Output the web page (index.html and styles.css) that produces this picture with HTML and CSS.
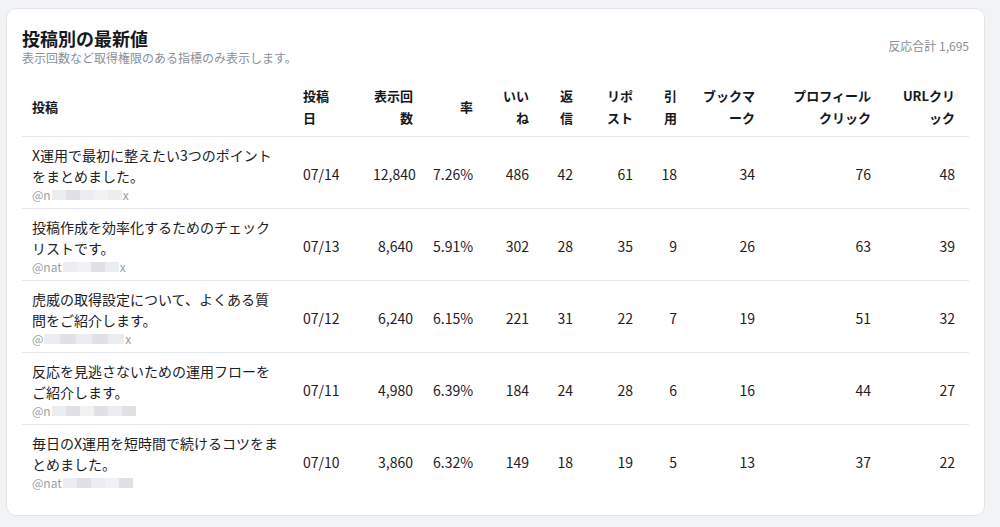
FILE: index.html
```html
<!DOCTYPE html>
<html lang="ja">
<head>
<meta charset="utf-8">
<title>投稿別の最新値</title>
<link rel="stylesheet" href="styles.css">
</head>
<body>
<div class="page">
  <section class="card">
    <header class="card-head">
      <div class="head-text">
        <h2 class="title">投稿別の最新値</h2>
        <p class="subtitle">表示回数など取得権限のある指標のみ表示します。</p>
      </div>
      <div class="total">反応合計 1,695</div>
    </header>
    <table class="posts">
      <colgroup>
        <col class="c-post"><col class="c-date"><col class="c-imp"><col class="c-rate"><col class="c-like"><col class="c-reply"><col class="c-rt"><col class="c-quote"><col class="c-bm"><col class="c-prof"><col class="c-url">
      </colgroup>
      <thead>
        <tr>
          <th class="left">投稿</th>
          <th class="left">投稿<br>日</th>
          <th>表示回<br>数</th>
          <th>率</th>
          <th>いい<br>ね</th>
          <th>返<br>信</th>
          <th>リポ<br>スト</th>
          <th>引<br>用</th>
          <th>ブックマ<br>ーク</th>
          <th>プロフィール<br>クリック</th>
          <th class="last">URLクリ<br>ック</th>
        </tr>
      </thead>
      <tbody>
        <tr>
          <td class="post"><div class="ptext">X運用で最初に整えたい3つのポイントをまとめました。</div><div class="handle">@n<span class="mz"><i class="m1"></i><i class="m2"></i><i class="m1"></i><i class="m3"></i><i class="m1"></i></span>x</div></td>
          <td class="left">07/14</td><td>12,840</td><td>7.26%</td><td>486</td><td>42</td><td>61</td><td>18</td><td>34</td><td>76</td><td class="last">48</td>
        </tr>
        <tr>
          <td class="post"><div class="ptext">投稿作成を効率化するためのチェックリストです。</div><div class="handle">@nat<span class="mz"><i class="m1"></i><i class="m3"></i><i class="m2"></i><i class="m1"></i></span>x</div></td>
          <td class="left">07/13</td><td>8,640</td><td>5.91%</td><td>302</td><td>28</td><td>35</td><td>9</td><td>26</td><td>63</td><td class="last">39</td>
        </tr>
        <tr>
          <td class="post"><div class="ptext">虎威の取得設定について、よくある質問をご紹介します。</div><div class="handle">@<span class="mz wide"><i class="m1"></i><i class="m2"></i><i class="m1"></i><i class="m2"></i><i class="m1"></i></span>x</div></td>
          <td class="left">07/12</td><td>6,240</td><td>6.15%</td><td>221</td><td>31</td><td>22</td><td>7</td><td>19</td><td>51</td><td class="last">32</td>
        </tr>
        <tr>
          <td class="post"><div class="ptext">反応を見逃さないための運用フローをご紹介します。</div><div class="handle">@n<span class="mz"><i class="m1"></i><i class="m2"></i><i class="m3"></i><i class="m2"></i><i class="m1"></i><i class="m2"></i></span></div></td>
          <td class="left">07/11</td><td>4,980</td><td>6.39%</td><td>184</td><td>24</td><td>28</td><td>6</td><td>16</td><td>44</td><td class="last">27</td>
        </tr>
        <tr>
          <td class="post"><div class="ptext">毎日のX運用を短時間で続けるコツをまとめました。</div><div class="handle">@nat<span class="mz"><i class="m1"></i><i class="m2"></i><i class="m1"></i><i class="m3"></i><i class="m2"></i></span></div></td>
          <td class="left">07/10</td><td>3,860</td><td>6.32%</td><td>149</td><td>18</td><td>19</td><td>5</td><td>13</td><td>37</td><td class="last">22</td>
        </tr>
      </tbody>
    </table>
  </section>
</div>
</body>
</html>
```
FILE: styles.css
```css
* { box-sizing: border-box; }
html, body { margin: 0; padding: 0; }
body {
  background: #f2f3f5;
  font-family: "Noto Sans CJK JP", "Noto Sans", sans-serif;
  color: #1d2024;
  width: 1000px;
  height: 527px;
  overflow: hidden;
}
.page {
  padding: 8px 15px 0 6px;
}
.card {
  background: #fff;
  border: 1px solid #e2e4e8;
  border-radius: 10px;
  padding: 17px 15px 18px 15px;
}
.card-head {
  display: flex;
  align-items: center;
  justify-content: space-between;
}
.title {
  margin: 0;
  font-size: 18px;
  line-height: 24px;
  font-weight: 700;
  color: #15181c;
}
.subtitle {
  margin: 0;
  font-size: 12px;
  line-height: 16px;
  color: #8b9098;
}
.total {
  font-size: 12px;
  line-height: 16px;
  color: #8b9098;
}
.posts {
  margin-top: 12px;
  width: 947px;
  table-layout: fixed;
  border-collapse: collapse;
}
.c-post { width: 271px; }
.c-date { width: 70px; }
.c-imp { width: 60px; }
.c-rate { width: 60px; }
.c-like { width: 56px; }
.c-reply { width: 44px; }
.c-rt { width: 60px; }
.c-quote { width: 44px; }
.c-bm { width: 78px; }
.c-prof { width: 116px; }
.c-url { width: 88px; }
th {
  font-size: 13px;
  line-height: 22px;
  font-weight: 700;
  color: #15181c;
  text-align: right;
  padding: 7px 10px;
  white-space: nowrap;
  vertical-align: middle;
  border-bottom: 1px solid #e4e6ea;
}
td {
  font-size: 14px;
  line-height: 21px;
  text-align: right;
  padding: 8px 10px 5px 10px;
  vertical-align: middle;
  white-space: nowrap;
  border-bottom: 1px solid #e4e6ea;
  color: #1d2024;
}
tbody tr:last-child td { border-bottom: none; padding-bottom: 6px; }
th.left, td.left { text-align: left; }
th.last, td.last { padding-right: 14px; }
td.post {
  text-align: left;
  white-space: normal;
  padding-right: 13px;
}
.ptext {
  line-height: 21px;
}
.handle {
  font-size: 12px;
  line-height: 16px;
  color: #9a9fa6;
  display: flex;
  align-items: center;
}
.mz {
  display: inline-flex;
  height: 10px;
  margin: 0 1px;
}
.mz i {
  display: block;
  width: 14px;
  height: 10px;
  background: #ebedf0;
}
.mz i.m2 { background: #dfe1e4; }
.mz i.m3 { background: #f1f2f4; }
.mz.wide i { width: 16px; }
```
